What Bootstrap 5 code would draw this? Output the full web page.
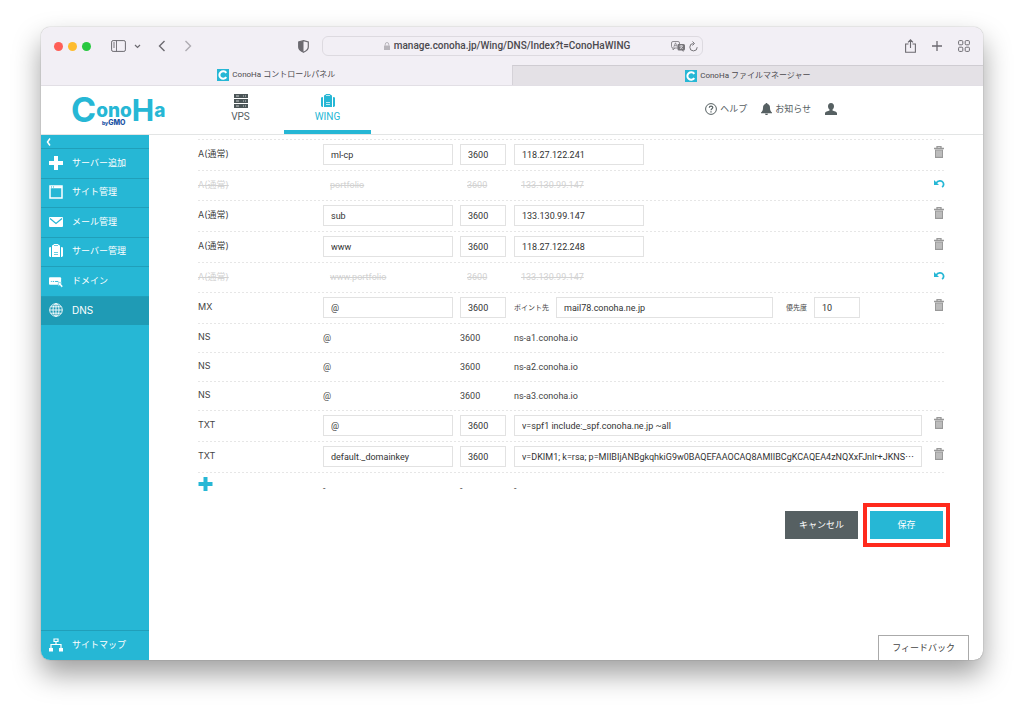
<!DOCTYPE html>
<html lang="ja">
<head>
<meta charset="utf-8">
<meta name="viewport" content="width=device-width, initial-scale=1">
<title>ConoHa コントロールパネル</title>
<link href="https://cdn.jsdelivr.net/npm/bootstrap@5.3.0/dist/css/bootstrap.min.css" rel="stylesheet">
<style>
:root{--aqua:#26b7d5;--slate:#566062}
body{font-family:Inter,"Noto Sans CJK JP",sans-serif;font-size:9px;line-height:12px;color:#444;background:#fff;padding:27px 41px 54px}
svg{display:block;flex:none}
a{color:inherit;text-decoration:none}
.browser{border-radius:9px;box-shadow:0 0 1px rgba(0,0,0,.5),0 14px 28px rgba(0,0,0,.38)}
.chrome-bar{height:38px;background:#f2eff5;color:#6c6a70}
.tool{border:0;background:none;padding:0;color:inherit}
.lights{gap:5px}
.light{width:9px;height:9px;border-radius:50%}
.address{flex:0 1 381px;height:20px;border:1px solid #dddae0;border-radius:6px;font:500 10px/14px Roboto,sans-serif;color:#4b494e}
.side-tools,.address-side{flex:1 1 0}
.side-tools{padding:0 13px}
.tab-strip{height:21px;background:#f2eff5;color:#4b494e;border-bottom:1px solid #e2dfe5;font:400 8px/12px Roboto,"Noto Sans CJK JP",sans-serif}
.tab-strip a{flex:1 1 0;gap:3px}
.tab-off{background:#e4e1e6;border-top:1px solid #cfccd2;border-left:1px solid #d5d2d8}
.site-head{height:49px;border-bottom:1px solid #e3e5e5;color:var(--slate)}
.brand-box{width:156px;padding-left:31px}
.svc{width:87px;font:10px/14px Roboto,sans-serif;border-bottom:4px solid transparent;padding-top:8px;gap:2px}
.svc.active{color:var(--aqua);border-color:var(--aqua)}
.head-links{padding:0 146px 2px 0;gap:14px}
.head-links a{gap:3px}
.side{width:108px;background:var(--aqua);color:#fff}
.side a{height:30px;padding:0 0 2px 8px;border-top:1px solid #209fba}
.side a:nth-of-type(even){height:29px}
.side a.active{background:#1f9bb5;font-size:10px}
.side a span{padding-left:9px}
.fold{height:13px;padding-left:5px}
.records-area{padding:4px 39px 0 49px}
.records,.field{font-family:Roboto,"Noto Sans CJK JP",sans-serif}
.records{table-layout:fixed;width:100%}
.records td{height:31px;padding:0;vertical-align:middle}
.records tr{background:repeating-linear-gradient(90deg,#e6e6e6 0 2px,#fff 2px 4px) 0 0/100% 1px no-repeat}
.records .gone td{height:30px;color:#d2d2d2}
.records .gone s{padding-left:7px}
.records .fixed td{height:29px}
.records .kind{padding-bottom:1px;font-family:Inter,"Noto Sans CJK JP",sans-serif}
.records .act{padding-bottom:2px}
.records .gone .act{padding-bottom:0}
.field{height:21px;border:1px solid #e2e2e2;border-radius:0;padding:0 7px;font-size:9px;line-height:12px;color:#333;background:#fff;outline:0;min-width:0}
.w-host{width:130px}.w-ttl{width:46px}.w-mail{width:217px}
.field-note{font-size:7px;margin-right:7px}
.field-note.prio{margin-left:13px}
.act-btn{border:0;background:none;padding:0 0 0 4px;color:#999}
.act-btn svg{overflow:visible}
.back-btn,.add-btn{color:var(--aqua)}
.save-bar{gap:5px;margin-right:-6px}
.flat-btn{width:73px;height:28px;border:0;border-radius:0;padding:0;font-size:9px;line-height:12px;color:#fff}
.flat-btn.cancel{background:#566062}.flat-btn.save{background:var(--aqua)}
.callout{border:4px solid #ff2a1c;padding:4px 3px}
.feedback{width:91px;height:25px;border:1px solid #aaa;border-bottom:0;background:#fff;margin-right:14px;padding:0;color:#444}
</style>
</head>
<body class="min-vh-100 d-flex">
<svg width="0" height="0" class="position-absolute" aria-hidden="true">
<symbol id="trash" viewBox="0 0 10 12"><path d="M3 2V.7h4V2M0 2.500h10" fill="none" stroke="currentColor" stroke-width="1.300"/><path d="M1 3.500h8V12H1z" fill="currentColor"/><path d="M3 4.500v6.300M5 4.500v6.300M7 4.500v6.300" stroke="#fff" stroke-width=".7"/></symbol>
<symbol id="undo" viewBox="0 0 11 10"><path d="M2 4.200C4 1.400 7.600 1.200 9 3.400c1.100 1.900.5 3.600-.9 4.700" fill="none" stroke="currentColor" stroke-width="1.700"/><path d="M0 1v5h5z" fill="currentColor"/></symbol>
<symbol id="cross" viewBox="0 0 14 14"><path d="M5 0h4v5h5v4H9v5H5V9H0V5h5z" fill="currentColor"/></symbol>
<symbol id="wing" viewBox="0 0 14 14"><path d="M3 1.500 4.500.8 5 0h4l.5.800 1.500.7V13H3z" fill="currentColor"/><path d="M0 3.500 2 3v10H1L0 12zM12 3l2 .5V12l-1 1h-1z" fill="currentColor"/><path d="M5 1.500h4M5 8.500h4M5 10.500h4" stroke="var(--cut,#fff)" stroke-width=".7"/></symbol>
<symbol id="favicon" viewBox="0 0 12 12"><path d="M0 0h12v12H0z" fill="#26b7d5"/><path d="M9.300 3.800A3.800 3.800 0 1 0 9.300 8.200" fill="none" stroke="#fff" stroke-width="2"/></symbol>
</svg>

<div class="browser flex-grow-1 d-flex flex-column overflow-hidden bg-white">
  <div class="chrome-bar d-flex align-items-center">
    <div class="side-tools d-flex align-items-center">
      <div class="lights d-flex"><span class="light" style="background:#ff5f57"></span><span class="light" style="background:#febc2e"></span><span class="light" style="background:#28c840"></span></div>
      <button class="tool ms-3 ps-1" aria-label="サイドバー"><svg width="15" height="12" viewBox="0 0 15 12" fill="none" stroke="currentColor"><rect x=".6" y=".6" width="13.800" height="10.800" rx="1.500"/><path d="M5.500.6v10.800M2 3h2M2 5h2M2 7h2" stroke-width=".9"/></svg></button>
      <button class="tool ms-2" aria-label="タブグループ"><svg width="7" height="5" viewBox="0 0 7 5" fill="none" stroke="currentColor" stroke-width="1.200"><path d="M1 1l2.500 2.500L6 1"/></svg></button>
      <button class="tool ms-3" aria-label="戻る"><svg width="10" height="12" viewBox="0 0 10 12" fill="none" stroke="currentColor" stroke-width="1.400"><path d="M7.500 1 2.500 6l5 5"/></svg></button>
      <button class="tool ms-3 opacity-50" aria-label="進む"><svg width="10" height="12" viewBox="0 0 10 12" fill="none" stroke="currentColor" stroke-width="1.400"><path d="M2.500 1l5 5-5 5"/></svg></button>
      <button class="tool ms-auto" aria-label="プライバシー"><svg width="11" height="13" viewBox="0 0 11 13"><path d="M5.500.7 10.300 2v5c0 2.500-2 4-4.800 5.300C2.700 11 .7 9.500.7 7V2z" fill="none" stroke="currentColor" stroke-width="1.200"/><path d="M5.500.7v11.600C2.700 11 .7 9.500.7 7V2z" fill="currentColor"/></svg></button>
    </div>
    <div class="address d-flex align-items-center">
      <div class="address-side d-flex justify-content-end pe-1"><svg width="6" height="8" viewBox="0 0 6 8" style="color:#b8b5bb"><path d="M0 3.500h6V8H0z" fill="currentColor"/><path d="M1.300 3.500V2.200a1.700 1.700 0 0 1 3.400 0v1.300" fill="none" stroke="currentColor"/></svg></div>
      <span>manage.conoha.jp/Wing/DNS/Index?t=ConoHaWING</span>
      <div class="address-side d-flex align-items-center justify-content-end pe-1 gap-1">
        <svg width="14" height="11" viewBox="0 0 14 11"><rect x=".5" y=".5" width="8" height="6.500" rx="1.500" fill="none" stroke="#77757a" stroke-width=".8"/><path d="M2.800 5.800 4.500 1.800l1.700 4M3.300 4.700h2M2 7v2l2-2" fill="none" stroke="#77757a" stroke-width=".7"/><path d="M7 3h5.500A1.500 1.500 0 0 1 14 4.500V8a1.500 1.500 0 0 1-1.500 1.500v1.400L11 9.500H8A1.500 1.500 0 0 1 6.500 8V4z" fill="#77757a"/><path d="M8.500 5h3.500M10.200 4v1M9 8l2.500-3M9.200 5.500 11.700 8" stroke="#f2eff5" stroke-width=".7"/></svg>
        <svg width="9" height="11" viewBox="0 0 9 11" fill="none" stroke="#77757a"><path d="M4.500 2.500a3.700 3.700 0 1 0 3.700 3.700M3.500.5l2 2-2 2"/></svg>
      </div>
    </div>
    <div class="side-tools d-flex align-items-center justify-content-end">
      <button class="tool" aria-label="共有"><svg width="11" height="14" viewBox="0 0 11 14" fill="none" stroke="currentColor" stroke-width="1.100"><path d="M3.500 5H.6v8.300h9.800V5H7.500M5.500 9V.9M3 3.300 5.500.8 8 3.300"/></svg></button>
      <button class="tool mx-3" aria-label="新規タブ"><svg width="10" height="10" viewBox="0 0 10 10" stroke="currentColor" stroke-width="1.300"><path d="M5 0v10M0 5h10"/></svg></button>
      <button class="tool" aria-label="タブ一覧"><svg width="12" height="12" viewBox="0 0 12 12" fill="none" stroke="currentColor"><rect x=".6" y=".6" width="4.200" height="4.200" rx="1"/><rect x="7.200" y=".6" width="4.200" height="4.200" rx="1"/><rect x=".6" y="7.200" width="4.200" height="4.200" rx="1"/><rect x="7.200" y="7.200" width="4.200" height="4.200" rx="1"/></svg></button>
    </div>
  </div>
  <div class="tab-strip d-flex">
    <a href="#" class="d-flex align-items-center justify-content-center"><svg width="12" height="12"><use href="#favicon"/></svg><span>ConoHa コントロールパネル</span></a>
    <a href="#" class="tab-off d-flex align-items-center justify-content-center"><svg width="12" height="12"><use href="#favicon"/></svg><span>ConoHa ファイルマネージャー</span></a>
  </div>

  <header class="site-head d-flex">
    <a href="#" class="brand-box d-flex align-items-center"><svg width="92" height="34" viewBox="0 0 92 34" overflow="visible" font-family="Inter,sans-serif" font-weight="700" fill="#26b7d5" role="img" aria-label="ConoHa by GMO"><text y="29" x="-1"><tspan font-size="34">C</tspan><tspan font-size="19" dy="-5" font-weight="800">ono</tspan><tspan font-size="30" dy="4">H</tspan><tspan font-size="19" dy="-4" font-weight="800">a</tspan></text><text x="30" y="32" font-size="7" font-weight="800" fill="#1b54a5"><tspan font-size="5">by</tspan>GMO</text></svg></a>
    <nav class="d-flex">
      <a href="#" class="svc d-flex flex-column align-items-center"><svg width="14" height="14" viewBox="0 0 14 14"><path d="M0 0h14v4H0zM0 5h14v4H0zM0 10h14v4H0z" fill="#4b5557"/><path d="M2 2h3M2 7h3M2 12h3M9 2h1M11 2h1M9 7h1M11 7h1M9 12h1M11 12h1" stroke="#c9cdce"/></svg>VPS</a>
      <a href="#" class="svc active d-flex flex-column align-items-center"><svg width="14" height="14"><use href="#wing"/></svg>WING</a>
    </nav>
    <div class="head-links d-flex align-items-center ms-auto">
      <a href="#" class="d-flex align-items-center"><svg width="12" height="12" viewBox="0 0 12 12" fill="none" stroke="currentColor"><circle cx="6" cy="6" r="5.400"/><path d="M4.300 4.800C4.300 2.500 7.800 2.500 7.800 4.600 7.800 5.800 6 5.700 6 7.200M6 8.200v1.200" stroke-width="1.200"/></svg>ヘルプ</a>
      <a href="#" class="d-flex align-items-center"><svg width="11" height="12" viewBox="0 0 11 12" fill="currentColor"><path d="M5.500 0c.7 0 1 .4 1 1C8.500 1.500 9 3 9 5c0 2.500.8 3.500 2 4.500v.8H0v-.8C1.200 8.500 2 7.500 2 5c0-2 .5-3.500 2.500-4 0-.6.3-1 1-1zM4 10.700h3c0 1.700-3 1.700-3 0z"/></svg>お知らせ</a>
      <a href="#" aria-label="アカウント"><svg width="12" height="12" viewBox="0 0 12 12" fill="currentColor"><path d="M6 0c2 0 3 1.300 3 3.300 0 1.600-.7 2.500-1.500 3.200v1C9 8.200 12 8.500 12 10.500V12H0v-1.500c0-2 3-2.300 4.500-3v-1C3.700 5.800 3 4.900 3 3.300 3 1.300 4 0 6 0z"/></svg></a>
    </div>
  </header>

  <div class="flex-grow-1 d-flex">
    <nav class="side d-flex flex-column flex-shrink-0" style="--cut:#26b7d5">
      <button class="tool fold text-white text-start" aria-label="メニューを閉じる"><svg width="5" height="8" viewBox="0 0 5 8" fill="none" stroke="currentColor" stroke-width="1.500"><path d="M4 .5 1.500 4 4 7.500"/></svg></button>
      <a href="#" class="d-flex align-items-center"><svg width="14" height="14"><use href="#cross"/></svg><span>サーバー追加</span></a>
      <a href="#" class="d-flex align-items-center"><svg width="14" height="14" viewBox="0 0 14 14"><path d="M1 1h12v12H1z" fill="none" stroke="#fff" stroke-width="1.500"/><path d="M1 2.200h12" stroke="#fff" stroke-width="2"/><path d="M2 2h1M4 2h1" stroke="#26b7d5"/></svg><span>サイト管理</span></a>
      <a href="#" class="d-flex align-items-center"><svg width="14" height="14" viewBox="0 0 14 14"><rect y="2" width="14" height="10" rx="1" fill="#fff"/><path d="M1 3.500l6 5 6-5" fill="none" stroke="#26b7d5" stroke-width="1.200"/></svg><span>メール管理</span></a>
      <a href="#" class="d-flex align-items-center"><svg width="14" height="14"><use href="#wing"/></svg><span>サーバー管理</span></a>
      <a href="#" class="d-flex align-items-center"><svg width="14" height="14" viewBox="0 0 15 14"><rect y="3" width="13" height="8" rx="1" fill="#fff"/><path d="M2 7.500h1M4 7.500h1.500M6.500 7.500h3.500" stroke="#26b7d5"/><path d="M10 8.500h4l-1.200 1.500L15 12.500 13.500 14l-2-2.500L10 13z" fill="#fff" stroke="#26b7d5" stroke-width=".5"/></svg><span>ドメイン</span></a>
      <a href="#" class="active d-flex align-items-center"><svg width="14" height="14" viewBox="0 0 14 14" fill="none" stroke="#fff" stroke-width=".9"><circle cx="7" cy="7" r="6.300"/><ellipse cx="7" cy="7" rx="3" ry="6.300"/><path d="M7 .7v12.600M.7 7h12.600M1.700 3.800h10.600M1.700 10.200h10.600"/></svg><span>DNS</span></a>
      <a href="#" class="d-flex align-items-center mt-auto"><svg width="14" height="14" viewBox="0 0 14 14" fill="none" stroke="#fff"><path d="M5 1h4v2.500H5zM7 3.500v3M2 10V6.500h10V10" stroke-width="1.200"/><path d="M0 10h4v3.500H0zM10 10h4v3.500h-4z" fill="#fff" stroke="none"/></svg><span>サイトマップ</span></a>
    </nav>
    <main class="flex-grow-1 d-flex flex-column">
      <div class="records-area">
        <table class="records">
          <colgroup><col style="width:125px"><col style="width:137px"><col style="width:54px"><col><col style="width:14px"></colgroup>
          <tbody id="rows"></tbody>
        </table>
        <div class="save-bar d-flex justify-content-end align-items-center">
          <button class="flat-btn cancel">キャンセル</button>
          <div class="callout"><button class="flat-btn save d-block">保存</button></div>
        </div>
      </div>
      <button class="feedback mt-auto align-self-end">フィードバック</button>
    </main>
  </div>
</div>
<script>
const records = [
  ['A(通常)', 'ml-cp', '118.27.122.241'],
  ['A(通常)', 'portfolio', '133.130.99.147', 'gone'],
  ['A(通常)', 'sub', '133.130.99.147'],
  ['A(通常)', 'www', '118.27.122.248'],
  ['A(通常)', 'www.portfolio', '133.130.99.147', 'gone'],
  ['MX', '@', 'mail78.conoha.ne.jp', 'mx'],
  ['NS', '@', 'ns-a1.conoha.io', 'fixed'],
  ['NS', '@', 'ns-a2.conoha.io', 'fixed'],
  ['NS', '@', 'ns-a3.conoha.io', 'fixed'],
  ['TXT', '@', 'v=spf1 include:_spf.conoha.ne.jp ~all', 'txt'],
  ['TXT', 'default._domainkey', 'v=DKIM1; k=rsa; p=MIIBIjANBgkqhkiG9w0BAQEFAAOCAQ8AMIIBCgKCAQEA4zNQXxFJnIr+JKNS⋯', 'txt']
];
const input = (cls, label, value) => `<input type="text" class="field ${cls}" aria-label="${label}" value="${value}">`;
const button = (icon, label) => icon === 'trash'
  ? `<button class="act-btn" aria-label="${label}"><svg width="10" height="12"><use href="#trash"/></svg></button>`
  : `<button class="act-btn back-btn" aria-label="${label}"><svg width="11" height="10"><use href="#undo"/></svg></button>`;
document.getElementById('rows').innerHTML = records.map(([kind, host, value, mode = 'a']) => {
  if (mode === 'gone') return `<tr class="gone"><td class="kind"><s class="ps-0">${kind}</s></td><td><s>${host}</s></td><td><s>3600</s></td><td><s>${value}</s></td><td class="act">${button('undo', '元に戻す')}</td></tr>`;
  if (mode === 'fixed') return `<tr class="fixed"><td class="kind">${kind}</td><td>${host}</td><td>3600</td><td>${value}</td><td></td></tr>`;
  const target = mode === 'mx'
    ? `<div class="d-flex align-items-center"><label class="field-note" for="mx-host">ポイント先</label><input type="text" id="mx-host" class="field w-mail" value="${value}"><label class="field-note prio" for="mx-prio">優先度</label><input type="text" id="mx-prio" class="field w-ttl" value="10"></div>`
    : `<div class="d-flex${mode === 'txt' ? ' pe-2' : ''}">${input(mode === 'txt' ? 'w-100' : 'w-host', '値', value)}</div>`;
  return `<tr><td class="kind">${kind}</td><td><div class="d-flex">${input('w-host', '名称', host)}</div></td><td><div class="d-flex">${input('w-ttl', 'TTL', '3600')}</div></td><td>${target}</td><td class="act">${button('trash', '削除')}</td></tr>`;
}).join('') + `<tr><td><button class="tool add-btn d-block mb-2" aria-label="追加"><svg width="15" height="14"><use href="#cross"/></svg></button></td><td>-</td><td>-</td><td>-</td><td></td></tr>`;
</script>
<script src="https://cdn.jsdelivr.net/npm/bootstrap@5.3.0/dist/js/bootstrap.bundle.min.js"></script>
</body>
</html>
